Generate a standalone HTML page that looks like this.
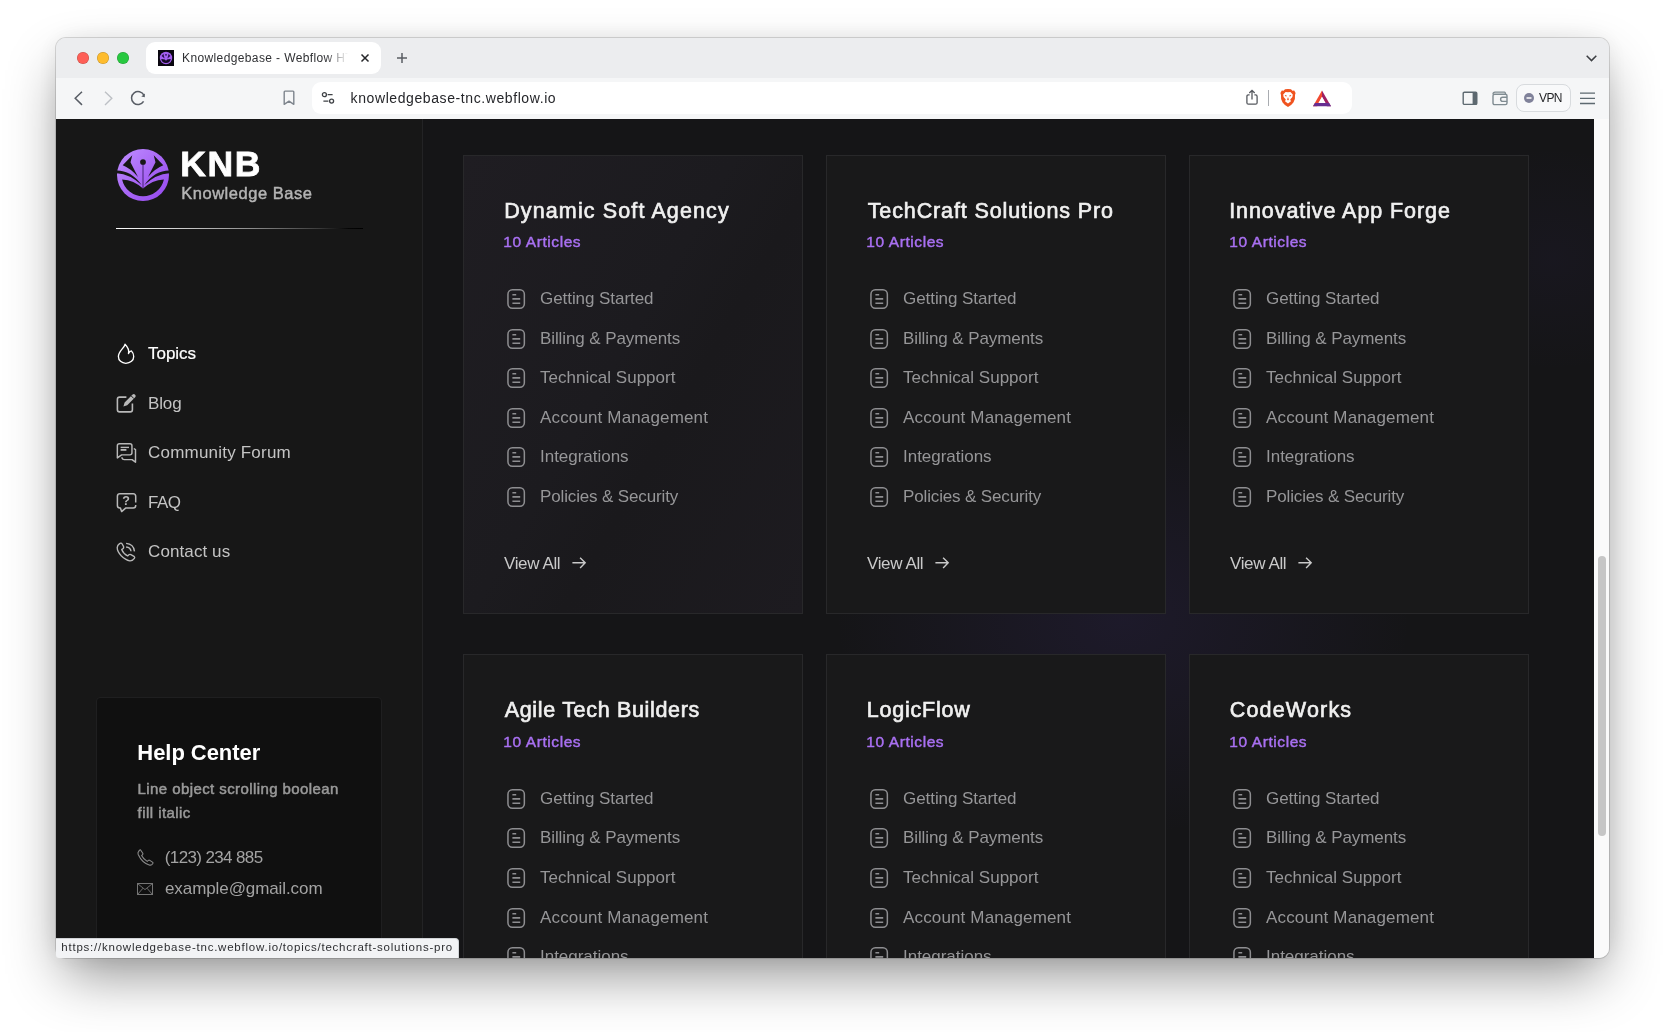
<!DOCTYPE html>
<html lang="en">
<head>
<meta charset="utf-8">
<title>Knowledgebase - Webflow HTML website template</title>
<style>
*{box-sizing:border-box;margin:0;padding:0}
html,body{width:1665px;height:1032px;overflow:hidden;background:#fff}
body{font-family:"Liberation Sans",sans-serif;position:relative}
#win{will-change:transform;position:absolute;left:56px;top:38px;width:1553px;height:920px;border-radius:10px;background:#f5f6f7;
  box-shadow:0 0 0 1px rgba(0,0,0,.14),0 24px 56px -8px rgba(0,0,0,.44),0 0 26px rgba(0,0,0,.07)}
#clip{position:absolute;left:0;top:0;width:1553px;height:920px;border-radius:10px;overflow:hidden}
#tabbar{position:absolute;left:0;top:0;width:1553px;height:40px;background:#ecedef}
#toolbar{position:absolute;left:0;top:40px;width:1553px;height:41px;background:#f5f6f7}
.light{position:absolute;top:14px;width:12px;height:12px;border-radius:50%;box-shadow:inset 0 0 0 .5px rgba(0,0,0,.24)}
#tab{position:absolute;left:90px;top:4px;width:235px;height:32px;border-radius:9px;background:#fff}
#url{position:absolute;left:256px;top:44px;width:1040px;height:32px;border-radius:9px;background:#fff}
#vpn{position:absolute;left:1460px;top:46px;width:55px;height:28px;border-radius:8px;border:1px solid #d8dbde;background:#f8f9fa}
#page{position:absolute;left:0;top:81px;width:1538px;height:839px;background:#151517;overflow:hidden}
#sbar{position:absolute;left:1538px;top:81px;width:15px;height:839px;background:#fafafa}
#thumb{position:absolute;left:4px;top:437px;width:8px;height:280px;border-radius:4px;background:#c6c6c6}
#side{position:absolute;left:0;top:0;width:367px;height:839px;background:#171717;border-right:1px solid #232325}
#main{position:absolute;left:367px;top:0;width:1171px;height:839px;overflow:hidden;background:radial-gradient(ellipse 400px 300px at 700px 500px,rgba(80,55,160,.14),transparent 72%),radial-gradient(ellipse 200px 160px at 1130px 140px,rgba(80,55,160,.06),transparent 70%)}
.t{position:absolute;white-space:nowrap;line-height:1}
svg{position:absolute;overflow:visible}
.card{position:absolute;width:340px;height:459px;border:1px solid #28282a;background:#19191a}
.c1{background:linear-gradient(120deg,#1f1d22 0%,#1c1b1f 45%,#1a191c 60%,#1d1b20 100%)}
#help{position:absolute;left:40px;top:578px;width:286px;height:300px;border:1px solid #1f1f20;border-radius:4px;background:#101010}
#status{position:absolute;left:0;top:900px;height:20px;width:403px;background:#f2f3f5;border-top:1px solid #d0d3d6;border-right:1px solid #d0d3d6;border-top-right-radius:4px;border-bottom-left-radius:3px}

</style>
</head>
<body>
<div id="win">
<div id="clip">
<div id="tabbar"></div><div id="toolbar"></div>
<div class="light" style="left:21px;background:#fe5f57"></div>
<div class="light" style="left:41px;background:#febc2e"></div>
<div class="light" style="left:61px;background:#28c840"></div>
<div id="tab"></div>
<svg style="left:102px;top:12px" width="16" height="16" viewBox="0 0 16 16">
<rect width="16" height="16" fill="#0a0710"/>
<circle cx="8" cy="8" r="6.2" fill="#a45ff0"/>
<path d="M3.2 9 Q8 9 8 11.4 Q8 9 12.8 9 A4.9 4.9 0 0 1 3.2 9Z" fill="#160a26"/>
<path d="M5.4 3.8 L3.6 6 L6.6 8.6 Z M10.6 3.8 L12.4 6 L9.4 8.6 Z" fill="#2a1050"/>
<circle cx="8" cy="4.8" r=".9" fill="#2a1050"/>
</svg>
<div class="t" style="left:126.00px;top:13.54px;font-size:12px;color:#2f3033;letter-spacing:0.38px;width:170px;height:18px;overflow:hidden;-webkit-mask-image:linear-gradient(90deg,#000 0,#000 143px,transparent 166px);mask-image:linear-gradient(90deg,#000 0,#000 143px,transparent 166px);">Knowledgebase - Webflow HTML website template</div>
<svg style="left:305px;top:16px" width="8" height="8" viewBox="0 0 8 8"><path d="M.5 .5 L7.5 7.5 M7.5 .5 L.5 7.5" stroke="#26272a" stroke-width="1.5" fill="none"/></svg>
<svg style="left:341px;top:15px" width="10" height="10" viewBox="0 0 10 10"><path d="M5 0 V10 M0 5 H10" stroke="#5a5d63" stroke-width="1.5" fill="none"/></svg>
<svg style="left:1529.5px;top:17px" width="11" height="7" viewBox="0 0 11 7"><path d="M.7 .8 L5.5 5.6 L10.3 .8" stroke="#3c3e42" stroke-width="1.5" fill="none"/></svg>
<svg style="left:17.5px;top:52.5px" width="9" height="15" viewBox="0 0 9 15"><path d="M8 .8 L1.2 7.3 L8 13.9" stroke="#585d65" stroke-width="1.5" fill="none"/></svg>
<svg style="left:47.599999999999994px;top:52.5px" width="9" height="15" viewBox="0 0 9 15"><path d="M1 .8 L7.8 7.3 L1 13.9" stroke="#bdc0c5" stroke-width="1.4" fill="none"/></svg>
<svg style="left:73.5px;top:51.7px" width="16" height="16" viewBox="0 0 16 16">
<path d="M13.9 5.2 A6.5 6.5 0 1 0 13.6 11.4" stroke="#585d65" stroke-width="1.5" fill="none"/>
<path d="M14.9 3.4 L14.8 7.3 L11.3 6.4 Z" fill="#585d65"/></svg>
<svg style="left:227px;top:52px" width="12" height="16" viewBox="0 0 12 16"><path d="M1.2 1.9 Q1.2 1.1 2 1.1 H10 Q10.8 1.1 10.8 1.9 V14.3 L6 11.2 L1.2 14.3 Z" stroke="#7d848c" stroke-width="1.4" fill="none" stroke-linejoin="round"/></svg>
<div id="url"></div>
<svg style="left:265px;top:53px" width="14" height="14" viewBox="0 0 14 14">
<circle cx="3.4" cy="3.7" r="2" stroke="#3f4246" stroke-width="1.3" fill="none"/><path d="M6.6 3.7 H11.6" stroke="#3f4246" stroke-width="1.3"/>
<circle cx="10.6" cy="10.1" r="2" stroke="#3f4246" stroke-width="1.3" fill="none"/><path d="M2.4 10.1 H7.4" stroke="#3f4246" stroke-width="1.3"/></svg>
<div class="t" style="left:294.60px;top:52.95px;font-size:14px;color:#25262a;letter-spacing:0.59px;">knowledgebase-tnc.webflow.io</div>
<svg style="left:1189px;top:51px" width="14" height="17" viewBox="0 0 14 17">
<path d="M4.6 5.9 H3.4 Q1.9 5.9 1.9 7.4 V13.7 Q1.9 15.2 3.4 15.2 H10.6 Q12.1 15.2 12.1 13.7 V7.4 Q12.1 5.9 10.6 5.9 H9.4" stroke="#55585e" stroke-width="1.3" fill="none"/>
<path d="M7 10.6 V1.6 M4.3 4 L7 1.3 L9.7 4" stroke="#55585e" stroke-width="1.3" fill="none"/></svg>
<div style="position:absolute;left:1212px;top:52px;width:1px;height:16px;background:#a9acb1"></div>
<svg style="left:1224px;top:51px" width="16" height="18" viewBox="0 0 16 18">
<path d="M8 0 L11 .3 L12.4 1.8 L14.2 1.5 L15.6 4 L15 6 Q15.6 9.6 13.4 13.4 Q11 16.6 8 18 Q5 16.6 2.6 13.4 Q.4 9.6 1 6 L.4 4 L1.8 1.5 L3.6 1.8 L5 .3 Z" fill="#f0531f"/>
<path d="M8 3.2 L10.4 3 L12.8 5.4 L12.4 8 L10.2 10.6 L11 12.2 L8 14.4 L5 12.2 L5.8 10.6 L3.6 8 L3.2 5.4 L5.6 3 Z" fill="#fff"/>
<path d="M5 6 L7 6.8 L6.4 7.6 L4.8 7 Z M11 6 L9 6.8 L9.6 7.6 L11.2 7 Z M8 8 L8.9 10.4 L8 11.6 L7.1 10.4 Z" fill="#f0531f"/>
</svg>
<svg style="left:1257px;top:51.599999999999994px" width="18" height="17" viewBox="0 0 18 17">
<path d="M9 .4 L0 16.2 H4.2 L9 7 Z" fill="#f1492f"/>
<path d="M9 .4 L18 16.2 H13.8 L9 7 Z" fill="#9e1f63"/>
<path d="M0 16.2 H18 L16.1 12.9 H1.9 Z" fill="#662d91"/>
<path d="M9 6.8 L12.6 13 H5.4 Z" fill="#fff"/>
</svg>
<svg style="left:1406px;top:53px" width="16" height="15" viewBox="0 0 16 15">
<rect x="1.2" y="1.2" width="13.6" height="12.2" rx="1.2" stroke="#5d6970" stroke-width="1.4" fill="none"/>
<rect x="10.6" y="1.2" width="4.4" height="12.2" fill="#5d6970"/></svg>
<svg style="left:1436px;top:52.599999999999994px" width="16" height="15" viewBox="0 0 16 15">
<path d="M1 3.2 Q1 1.2 3 1.2 H12.4 Q13.4 1.2 13.4 2.6 V3.2" stroke="#7f8b91" stroke-width="1.3" fill="none"/>
<rect x="1" y="3.2" width="14" height="10.4" rx="1.6" stroke="#7f8b91" stroke-width="1.4" fill="none"/>
<path d="M15 6.2 H10.6 Q8.6 6.2 8.6 8.3 Q8.6 10.4 10.6 10.4 H15" stroke="#7f8b91" stroke-width="1.4" fill="none"/></svg>
<div id="vpn"></div>
<svg style="left:1468px;top:55px" width="10" height="10" viewBox="0 0 10 10"><circle cx="5" cy="5" r="5" fill="#80829a"/><rect x="2.3" y="4.3" width="5.4" height="1.5" rx=".7" fill="#fff"/></svg>
<div class="t" style="left:1483.00px;top:54.04px;font-size:12px;color:#1f2023;letter-spacing:-0.6px;">VPN</div>
<svg style="left:1523.5px;top:54px" width="15" height="13" viewBox="0 0 15 13"><path d="M0 1.2 H15 M0 6.3 H15 M0 11.5 H15" stroke="#5d6970" stroke-width="1.3"/></svg>
<div id="page">
<div id="main">
<div class="card c1" style="left:40px;top:36px">
<div class="t" style="left:40.20px;top:44.90px;font-size:21.5px;color:#f0f0f0;letter-spacing:1.122px;-webkit-text-stroke:0.65px #f0f0f0;">Dynamic Soft Agency</div>
<div class="t" style="left:39.30px;top:78.38px;font-size:15.5px;color:#a970f2;letter-spacing:0.58px;-webkit-text-stroke:.45px #a970f2;">10 Articles</div>
<svg style="left:42.7px;top:132.6px" width="19" height="20" viewBox="0 0 19 20"><rect x=".95" y=".75" width="16.4" height="18.5" rx="4.4" stroke="#8e8e91" stroke-width="1.5" fill="none"/><path d="M5.4 5.8 H9.2 M5.4 9.9 H13.2 M5.4 14.2 H13.2" stroke="#8e8e91" stroke-width="1.6"/></svg>
<div class="t" style="left:76.00px;top:133.61px;font-size:17px;color:#969698;letter-spacing:-0.06px;">Getting Started</div>
<svg style="left:42.7px;top:172.6px" width="19" height="20" viewBox="0 0 19 20"><rect x=".95" y=".75" width="16.4" height="18.5" rx="4.4" stroke="#8e8e91" stroke-width="1.5" fill="none"/><path d="M5.4 5.8 H9.2 M5.4 9.9 H13.2 M5.4 14.2 H13.2" stroke="#8e8e91" stroke-width="1.6"/></svg>
<div class="t" style="left:76.00px;top:173.61px;font-size:17px;color:#969698;letter-spacing:-0.09px;">Billing &amp; Payments</div>
<svg style="left:42.7px;top:211.6px" width="19" height="20" viewBox="0 0 19 20"><rect x=".95" y=".75" width="16.4" height="18.5" rx="4.4" stroke="#8e8e91" stroke-width="1.5" fill="none"/><path d="M5.4 5.8 H9.2 M5.4 9.9 H13.2 M5.4 14.2 H13.2" stroke="#8e8e91" stroke-width="1.6"/></svg>
<div class="t" style="left:76.00px;top:212.61px;font-size:17px;color:#969698;letter-spacing:0.02px;">Technical Support</div>
<svg style="left:42.7px;top:251.6px" width="19" height="20" viewBox="0 0 19 20"><rect x=".95" y=".75" width="16.4" height="18.5" rx="4.4" stroke="#8e8e91" stroke-width="1.5" fill="none"/><path d="M5.4 5.8 H9.2 M5.4 9.9 H13.2 M5.4 14.2 H13.2" stroke="#8e8e91" stroke-width="1.6"/></svg>
<div class="t" style="left:76.00px;top:252.61px;font-size:17px;color:#969698;letter-spacing:0.15px;">Account Management</div>
<svg style="left:42.7px;top:291.0px" width="19" height="20" viewBox="0 0 19 20"><rect x=".95" y=".75" width="16.4" height="18.5" rx="4.4" stroke="#8e8e91" stroke-width="1.5" fill="none"/><path d="M5.4 5.8 H9.2 M5.4 9.9 H13.2 M5.4 14.2 H13.2" stroke="#8e8e91" stroke-width="1.6"/></svg>
<div class="t" style="left:76.00px;top:292.01px;font-size:17px;color:#969698;letter-spacing:-0.02px;">Integrations</div>
<svg style="left:42.7px;top:330.6px" width="19" height="20" viewBox="0 0 19 20"><rect x=".95" y=".75" width="16.4" height="18.5" rx="4.4" stroke="#8e8e91" stroke-width="1.5" fill="none"/><path d="M5.4 5.8 H9.2 M5.4 9.9 H13.2 M5.4 14.2 H13.2" stroke="#8e8e91" stroke-width="1.6"/></svg>
<div class="t" style="left:76.00px;top:331.61px;font-size:17px;color:#969698;letter-spacing:-0.14px;">Policies &amp; Security</div>
<div class="t" style="left:40.10px;top:398.61px;font-size:17px;color:#c9c9c9;letter-spacing:-0.39px;">View All</div>
<svg style="left:108.2px;top:401.1px" width="14" height="12" viewBox="0 0 14 12"><path d="M.4 5.8 H13.2 M8.1 .7 L13.2 5.8 L8.1 10.9" stroke="#c9c9c9" stroke-width="1.4" fill="none"/></svg>
</div>
<div class="card" style="left:403px;top:36px">
<div class="t" style="left:40.70px;top:44.90px;font-size:21.5px;color:#f0f0f0;letter-spacing:0.886px;-webkit-text-stroke:0.65px #f0f0f0;">TechCraft Solutions Pro</div>
<div class="t" style="left:39.30px;top:78.38px;font-size:15.5px;color:#a970f2;letter-spacing:0.58px;-webkit-text-stroke:.45px #a970f2;">10 Articles</div>
<svg style="left:42.7px;top:132.6px" width="19" height="20" viewBox="0 0 19 20"><rect x=".95" y=".75" width="16.4" height="18.5" rx="4.4" stroke="#8e8e91" stroke-width="1.5" fill="none"/><path d="M5.4 5.8 H9.2 M5.4 9.9 H13.2 M5.4 14.2 H13.2" stroke="#8e8e91" stroke-width="1.6"/></svg>
<div class="t" style="left:76.00px;top:133.61px;font-size:17px;color:#969698;letter-spacing:-0.06px;">Getting Started</div>
<svg style="left:42.7px;top:172.6px" width="19" height="20" viewBox="0 0 19 20"><rect x=".95" y=".75" width="16.4" height="18.5" rx="4.4" stroke="#8e8e91" stroke-width="1.5" fill="none"/><path d="M5.4 5.8 H9.2 M5.4 9.9 H13.2 M5.4 14.2 H13.2" stroke="#8e8e91" stroke-width="1.6"/></svg>
<div class="t" style="left:76.00px;top:173.61px;font-size:17px;color:#969698;letter-spacing:-0.09px;">Billing &amp; Payments</div>
<svg style="left:42.7px;top:211.6px" width="19" height="20" viewBox="0 0 19 20"><rect x=".95" y=".75" width="16.4" height="18.5" rx="4.4" stroke="#8e8e91" stroke-width="1.5" fill="none"/><path d="M5.4 5.8 H9.2 M5.4 9.9 H13.2 M5.4 14.2 H13.2" stroke="#8e8e91" stroke-width="1.6"/></svg>
<div class="t" style="left:76.00px;top:212.61px;font-size:17px;color:#969698;letter-spacing:0.02px;">Technical Support</div>
<svg style="left:42.7px;top:251.6px" width="19" height="20" viewBox="0 0 19 20"><rect x=".95" y=".75" width="16.4" height="18.5" rx="4.4" stroke="#8e8e91" stroke-width="1.5" fill="none"/><path d="M5.4 5.8 H9.2 M5.4 9.9 H13.2 M5.4 14.2 H13.2" stroke="#8e8e91" stroke-width="1.6"/></svg>
<div class="t" style="left:76.00px;top:252.61px;font-size:17px;color:#969698;letter-spacing:0.15px;">Account Management</div>
<svg style="left:42.7px;top:291.0px" width="19" height="20" viewBox="0 0 19 20"><rect x=".95" y=".75" width="16.4" height="18.5" rx="4.4" stroke="#8e8e91" stroke-width="1.5" fill="none"/><path d="M5.4 5.8 H9.2 M5.4 9.9 H13.2 M5.4 14.2 H13.2" stroke="#8e8e91" stroke-width="1.6"/></svg>
<div class="t" style="left:76.00px;top:292.01px;font-size:17px;color:#969698;letter-spacing:-0.02px;">Integrations</div>
<svg style="left:42.7px;top:330.6px" width="19" height="20" viewBox="0 0 19 20"><rect x=".95" y=".75" width="16.4" height="18.5" rx="4.4" stroke="#8e8e91" stroke-width="1.5" fill="none"/><path d="M5.4 5.8 H9.2 M5.4 9.9 H13.2 M5.4 14.2 H13.2" stroke="#8e8e91" stroke-width="1.6"/></svg>
<div class="t" style="left:76.00px;top:331.61px;font-size:17px;color:#969698;letter-spacing:-0.14px;">Policies &amp; Security</div>
<div class="t" style="left:40.10px;top:398.61px;font-size:17px;color:#c9c9c9;letter-spacing:-0.39px;">View All</div>
<svg style="left:108.2px;top:401.1px" width="14" height="12" viewBox="0 0 14 12"><path d="M.4 5.8 H13.2 M8.1 .7 L13.2 5.8 L8.1 10.9" stroke="#c9c9c9" stroke-width="1.4" fill="none"/></svg>
</div>
<div class="card" style="left:766px;top:36px">
<div class="t" style="left:39.20px;top:44.90px;font-size:21.5px;color:#f0f0f0;letter-spacing:0.921px;-webkit-text-stroke:0.65px #f0f0f0;">Innovative App Forge</div>
<div class="t" style="left:39.30px;top:78.38px;font-size:15.5px;color:#a970f2;letter-spacing:0.58px;-webkit-text-stroke:.45px #a970f2;">10 Articles</div>
<svg style="left:42.7px;top:132.6px" width="19" height="20" viewBox="0 0 19 20"><rect x=".95" y=".75" width="16.4" height="18.5" rx="4.4" stroke="#8e8e91" stroke-width="1.5" fill="none"/><path d="M5.4 5.8 H9.2 M5.4 9.9 H13.2 M5.4 14.2 H13.2" stroke="#8e8e91" stroke-width="1.6"/></svg>
<div class="t" style="left:76.00px;top:133.61px;font-size:17px;color:#969698;letter-spacing:-0.06px;">Getting Started</div>
<svg style="left:42.7px;top:172.6px" width="19" height="20" viewBox="0 0 19 20"><rect x=".95" y=".75" width="16.4" height="18.5" rx="4.4" stroke="#8e8e91" stroke-width="1.5" fill="none"/><path d="M5.4 5.8 H9.2 M5.4 9.9 H13.2 M5.4 14.2 H13.2" stroke="#8e8e91" stroke-width="1.6"/></svg>
<div class="t" style="left:76.00px;top:173.61px;font-size:17px;color:#969698;letter-spacing:-0.09px;">Billing &amp; Payments</div>
<svg style="left:42.7px;top:211.6px" width="19" height="20" viewBox="0 0 19 20"><rect x=".95" y=".75" width="16.4" height="18.5" rx="4.4" stroke="#8e8e91" stroke-width="1.5" fill="none"/><path d="M5.4 5.8 H9.2 M5.4 9.9 H13.2 M5.4 14.2 H13.2" stroke="#8e8e91" stroke-width="1.6"/></svg>
<div class="t" style="left:76.00px;top:212.61px;font-size:17px;color:#969698;letter-spacing:0.02px;">Technical Support</div>
<svg style="left:42.7px;top:251.6px" width="19" height="20" viewBox="0 0 19 20"><rect x=".95" y=".75" width="16.4" height="18.5" rx="4.4" stroke="#8e8e91" stroke-width="1.5" fill="none"/><path d="M5.4 5.8 H9.2 M5.4 9.9 H13.2 M5.4 14.2 H13.2" stroke="#8e8e91" stroke-width="1.6"/></svg>
<div class="t" style="left:76.00px;top:252.61px;font-size:17px;color:#969698;letter-spacing:0.15px;">Account Management</div>
<svg style="left:42.7px;top:291.0px" width="19" height="20" viewBox="0 0 19 20"><rect x=".95" y=".75" width="16.4" height="18.5" rx="4.4" stroke="#8e8e91" stroke-width="1.5" fill="none"/><path d="M5.4 5.8 H9.2 M5.4 9.9 H13.2 M5.4 14.2 H13.2" stroke="#8e8e91" stroke-width="1.6"/></svg>
<div class="t" style="left:76.00px;top:292.01px;font-size:17px;color:#969698;letter-spacing:-0.02px;">Integrations</div>
<svg style="left:42.7px;top:330.6px" width="19" height="20" viewBox="0 0 19 20"><rect x=".95" y=".75" width="16.4" height="18.5" rx="4.4" stroke="#8e8e91" stroke-width="1.5" fill="none"/><path d="M5.4 5.8 H9.2 M5.4 9.9 H13.2 M5.4 14.2 H13.2" stroke="#8e8e91" stroke-width="1.6"/></svg>
<div class="t" style="left:76.00px;top:331.61px;font-size:17px;color:#969698;letter-spacing:-0.14px;">Policies &amp; Security</div>
<div class="t" style="left:40.10px;top:398.61px;font-size:17px;color:#c9c9c9;letter-spacing:-0.39px;">View All</div>
<svg style="left:108.2px;top:401.1px" width="14" height="12" viewBox="0 0 14 12"><path d="M.4 5.8 H13.2 M8.1 .7 L13.2 5.8 L8.1 10.9" stroke="#c9c9c9" stroke-width="1.4" fill="none"/></svg>
</div>
<div class="card" style="left:40px;top:535px">
<div class="t" style="left:40.70px;top:45.10px;font-size:21.5px;color:#f0f0f0;letter-spacing:0.677px;-webkit-text-stroke:0.65px #f0f0f0;">Agile Tech Builders</div>
<div class="t" style="left:39.30px;top:79.38px;font-size:15.5px;color:#a970f2;letter-spacing:0.58px;-webkit-text-stroke:.45px #a970f2;">10 Articles</div>
<svg style="left:42.7px;top:133.6px" width="19" height="20" viewBox="0 0 19 20"><rect x=".95" y=".75" width="16.4" height="18.5" rx="4.4" stroke="#8e8e91" stroke-width="1.5" fill="none"/><path d="M5.4 5.8 H9.2 M5.4 9.9 H13.2 M5.4 14.2 H13.2" stroke="#8e8e91" stroke-width="1.6"/></svg>
<div class="t" style="left:76.00px;top:134.61px;font-size:17px;color:#969698;letter-spacing:-0.06px;">Getting Started</div>
<svg style="left:42.7px;top:172.6px" width="19" height="20" viewBox="0 0 19 20"><rect x=".95" y=".75" width="16.4" height="18.5" rx="4.4" stroke="#8e8e91" stroke-width="1.5" fill="none"/><path d="M5.4 5.8 H9.2 M5.4 9.9 H13.2 M5.4 14.2 H13.2" stroke="#8e8e91" stroke-width="1.6"/></svg>
<div class="t" style="left:76.00px;top:173.61px;font-size:17px;color:#969698;letter-spacing:-0.09px;">Billing &amp; Payments</div>
<svg style="left:42.7px;top:212.6px" width="19" height="20" viewBox="0 0 19 20"><rect x=".95" y=".75" width="16.4" height="18.5" rx="4.4" stroke="#8e8e91" stroke-width="1.5" fill="none"/><path d="M5.4 5.8 H9.2 M5.4 9.9 H13.2 M5.4 14.2 H13.2" stroke="#8e8e91" stroke-width="1.6"/></svg>
<div class="t" style="left:76.00px;top:213.61px;font-size:17px;color:#969698;letter-spacing:0.02px;">Technical Support</div>
<svg style="left:42.7px;top:252.6px" width="19" height="20" viewBox="0 0 19 20"><rect x=".95" y=".75" width="16.4" height="18.5" rx="4.4" stroke="#8e8e91" stroke-width="1.5" fill="none"/><path d="M5.4 5.8 H9.2 M5.4 9.9 H13.2 M5.4 14.2 H13.2" stroke="#8e8e91" stroke-width="1.6"/></svg>
<div class="t" style="left:76.00px;top:253.61px;font-size:17px;color:#969698;letter-spacing:0.15px;">Account Management</div>
<svg style="left:42.7px;top:292.0px" width="19" height="20" viewBox="0 0 19 20"><rect x=".95" y=".75" width="16.4" height="18.5" rx="4.4" stroke="#8e8e91" stroke-width="1.5" fill="none"/><path d="M5.4 5.8 H9.2 M5.4 9.9 H13.2 M5.4 14.2 H13.2" stroke="#8e8e91" stroke-width="1.6"/></svg>
<div class="t" style="left:76.00px;top:293.01px;font-size:17px;color:#969698;letter-spacing:-0.02px;">Integrations</div>
<svg style="left:42.7px;top:331.6px" width="19" height="20" viewBox="0 0 19 20"><rect x=".95" y=".75" width="16.4" height="18.5" rx="4.4" stroke="#8e8e91" stroke-width="1.5" fill="none"/><path d="M5.4 5.8 H9.2 M5.4 9.9 H13.2 M5.4 14.2 H13.2" stroke="#8e8e91" stroke-width="1.6"/></svg>
<div class="t" style="left:76.00px;top:332.61px;font-size:17px;color:#969698;letter-spacing:-0.14px;">Policies &amp; Security</div>
<div class="t" style="left:40.10px;top:399.61px;font-size:17px;color:#c9c9c9;letter-spacing:-0.39px;">View All</div>
<svg style="left:108.2px;top:402.1px" width="14" height="12" viewBox="0 0 14 12"><path d="M.4 5.8 H13.2 M8.1 .7 L13.2 5.8 L8.1 10.9" stroke="#c9c9c9" stroke-width="1.4" fill="none"/></svg>
</div>
<div class="card" style="left:403px;top:535px">
<div class="t" style="left:39.70px;top:45.10px;font-size:21.5px;color:#f0f0f0;letter-spacing:0.8px;-webkit-text-stroke:0.65px #f0f0f0;">LogicFlow</div>
<div class="t" style="left:39.30px;top:79.38px;font-size:15.5px;color:#a970f2;letter-spacing:0.58px;-webkit-text-stroke:.45px #a970f2;">10 Articles</div>
<svg style="left:42.7px;top:133.6px" width="19" height="20" viewBox="0 0 19 20"><rect x=".95" y=".75" width="16.4" height="18.5" rx="4.4" stroke="#8e8e91" stroke-width="1.5" fill="none"/><path d="M5.4 5.8 H9.2 M5.4 9.9 H13.2 M5.4 14.2 H13.2" stroke="#8e8e91" stroke-width="1.6"/></svg>
<div class="t" style="left:76.00px;top:134.61px;font-size:17px;color:#969698;letter-spacing:-0.06px;">Getting Started</div>
<svg style="left:42.7px;top:172.6px" width="19" height="20" viewBox="0 0 19 20"><rect x=".95" y=".75" width="16.4" height="18.5" rx="4.4" stroke="#8e8e91" stroke-width="1.5" fill="none"/><path d="M5.4 5.8 H9.2 M5.4 9.9 H13.2 M5.4 14.2 H13.2" stroke="#8e8e91" stroke-width="1.6"/></svg>
<div class="t" style="left:76.00px;top:173.61px;font-size:17px;color:#969698;letter-spacing:-0.09px;">Billing &amp; Payments</div>
<svg style="left:42.7px;top:212.6px" width="19" height="20" viewBox="0 0 19 20"><rect x=".95" y=".75" width="16.4" height="18.5" rx="4.4" stroke="#8e8e91" stroke-width="1.5" fill="none"/><path d="M5.4 5.8 H9.2 M5.4 9.9 H13.2 M5.4 14.2 H13.2" stroke="#8e8e91" stroke-width="1.6"/></svg>
<div class="t" style="left:76.00px;top:213.61px;font-size:17px;color:#969698;letter-spacing:0.02px;">Technical Support</div>
<svg style="left:42.7px;top:252.6px" width="19" height="20" viewBox="0 0 19 20"><rect x=".95" y=".75" width="16.4" height="18.5" rx="4.4" stroke="#8e8e91" stroke-width="1.5" fill="none"/><path d="M5.4 5.8 H9.2 M5.4 9.9 H13.2 M5.4 14.2 H13.2" stroke="#8e8e91" stroke-width="1.6"/></svg>
<div class="t" style="left:76.00px;top:253.61px;font-size:17px;color:#969698;letter-spacing:0.15px;">Account Management</div>
<svg style="left:42.7px;top:292.0px" width="19" height="20" viewBox="0 0 19 20"><rect x=".95" y=".75" width="16.4" height="18.5" rx="4.4" stroke="#8e8e91" stroke-width="1.5" fill="none"/><path d="M5.4 5.8 H9.2 M5.4 9.9 H13.2 M5.4 14.2 H13.2" stroke="#8e8e91" stroke-width="1.6"/></svg>
<div class="t" style="left:76.00px;top:293.01px;font-size:17px;color:#969698;letter-spacing:-0.02px;">Integrations</div>
<svg style="left:42.7px;top:331.6px" width="19" height="20" viewBox="0 0 19 20"><rect x=".95" y=".75" width="16.4" height="18.5" rx="4.4" stroke="#8e8e91" stroke-width="1.5" fill="none"/><path d="M5.4 5.8 H9.2 M5.4 9.9 H13.2 M5.4 14.2 H13.2" stroke="#8e8e91" stroke-width="1.6"/></svg>
<div class="t" style="left:76.00px;top:332.61px;font-size:17px;color:#969698;letter-spacing:-0.14px;">Policies &amp; Security</div>
<div class="t" style="left:40.10px;top:399.61px;font-size:17px;color:#c9c9c9;letter-spacing:-0.39px;">View All</div>
<svg style="left:108.2px;top:402.1px" width="14" height="12" viewBox="0 0 14 12"><path d="M.4 5.8 H13.2 M8.1 .7 L13.2 5.8 L8.1 10.9" stroke="#c9c9c9" stroke-width="1.4" fill="none"/></svg>
</div>
<div class="card" style="left:766px;top:535px">
<div class="t" style="left:39.70px;top:45.10px;font-size:21.5px;color:#f0f0f0;letter-spacing:1.182px;-webkit-text-stroke:0.65px #f0f0f0;">CodeWorks</div>
<div class="t" style="left:39.30px;top:79.38px;font-size:15.5px;color:#a970f2;letter-spacing:0.58px;-webkit-text-stroke:.45px #a970f2;">10 Articles</div>
<svg style="left:42.7px;top:133.6px" width="19" height="20" viewBox="0 0 19 20"><rect x=".95" y=".75" width="16.4" height="18.5" rx="4.4" stroke="#8e8e91" stroke-width="1.5" fill="none"/><path d="M5.4 5.8 H9.2 M5.4 9.9 H13.2 M5.4 14.2 H13.2" stroke="#8e8e91" stroke-width="1.6"/></svg>
<div class="t" style="left:76.00px;top:134.61px;font-size:17px;color:#969698;letter-spacing:-0.06px;">Getting Started</div>
<svg style="left:42.7px;top:172.6px" width="19" height="20" viewBox="0 0 19 20"><rect x=".95" y=".75" width="16.4" height="18.5" rx="4.4" stroke="#8e8e91" stroke-width="1.5" fill="none"/><path d="M5.4 5.8 H9.2 M5.4 9.9 H13.2 M5.4 14.2 H13.2" stroke="#8e8e91" stroke-width="1.6"/></svg>
<div class="t" style="left:76.00px;top:173.61px;font-size:17px;color:#969698;letter-spacing:-0.09px;">Billing &amp; Payments</div>
<svg style="left:42.7px;top:212.6px" width="19" height="20" viewBox="0 0 19 20"><rect x=".95" y=".75" width="16.4" height="18.5" rx="4.4" stroke="#8e8e91" stroke-width="1.5" fill="none"/><path d="M5.4 5.8 H9.2 M5.4 9.9 H13.2 M5.4 14.2 H13.2" stroke="#8e8e91" stroke-width="1.6"/></svg>
<div class="t" style="left:76.00px;top:213.61px;font-size:17px;color:#969698;letter-spacing:0.02px;">Technical Support</div>
<svg style="left:42.7px;top:252.6px" width="19" height="20" viewBox="0 0 19 20"><rect x=".95" y=".75" width="16.4" height="18.5" rx="4.4" stroke="#8e8e91" stroke-width="1.5" fill="none"/><path d="M5.4 5.8 H9.2 M5.4 9.9 H13.2 M5.4 14.2 H13.2" stroke="#8e8e91" stroke-width="1.6"/></svg>
<div class="t" style="left:76.00px;top:253.61px;font-size:17px;color:#969698;letter-spacing:0.15px;">Account Management</div>
<svg style="left:42.7px;top:292.0px" width="19" height="20" viewBox="0 0 19 20"><rect x=".95" y=".75" width="16.4" height="18.5" rx="4.4" stroke="#8e8e91" stroke-width="1.5" fill="none"/><path d="M5.4 5.8 H9.2 M5.4 9.9 H13.2 M5.4 14.2 H13.2" stroke="#8e8e91" stroke-width="1.6"/></svg>
<div class="t" style="left:76.00px;top:293.01px;font-size:17px;color:#969698;letter-spacing:-0.02px;">Integrations</div>
<svg style="left:42.7px;top:331.6px" width="19" height="20" viewBox="0 0 19 20"><rect x=".95" y=".75" width="16.4" height="18.5" rx="4.4" stroke="#8e8e91" stroke-width="1.5" fill="none"/><path d="M5.4 5.8 H9.2 M5.4 9.9 H13.2 M5.4 14.2 H13.2" stroke="#8e8e91" stroke-width="1.6"/></svg>
<div class="t" style="left:76.00px;top:332.61px;font-size:17px;color:#969698;letter-spacing:-0.14px;">Policies &amp; Security</div>
<div class="t" style="left:40.10px;top:399.61px;font-size:17px;color:#c9c9c9;letter-spacing:-0.39px;">View All</div>
<svg style="left:108.2px;top:402.1px" width="14" height="12" viewBox="0 0 14 12"><path d="M.4 5.8 H13.2 M8.1 .7 L13.2 5.8 L8.1 10.9" stroke="#c9c9c9" stroke-width="1.4" fill="none"/></svg>
</div>
</div>
<div id="side">
<svg style="left:60.6px;top:29.6px" width="52" height="52" viewBox="0 0 52 52">
<defs><linearGradient id="lg" x1="0" y1="0" x2="1" y2="1"><stop offset="0" stop-color="#c08fff"/><stop offset=".55" stop-color="#a764f5"/><stop offset="1" stop-color="#9448ee"/></linearGradient></defs>
<circle cx="26" cy="26" r="26" fill="url(#lg)"/>
<path d="M15.3 6.2 L5.7 16.2 Q14.5 19.8 21 28 L13.5 13.2 Z" fill="#171717"/>
<path d="M36.7 6.2 L46.3 16.2 Q37.5 19.8 31 28 L38.5 13.2 Z" fill="#171717"/>
<path d="M-.2 21.6 Q14 21.6 24.6 36 Q13 25 -.2 24.2 Z" fill="#171717"/>
<path d="M52.2 21.6 Q38 21.6 27.4 36 Q39 25 52.2 24.2 Z" fill="#171717"/>
<path d="M5.1 30.4 Q17 31 26 39.6 Q35 31 46.9 30.4 A21.4 21.4 0 0 1 5.1 30.4 Z" fill="#171717"/>
<circle cx="26" cy="13.1" r="2.9" fill="#171717"/>
<path d="M26 15 V39" stroke="#3a1c66" stroke-width=".9"/>
</svg>
<div class="t" style="left:124.20px;top:28.45px;font-size:35.5px;color:#ffffff;font-weight:bold;letter-spacing:1.7px;-webkit-text-stroke:.8px #fff;">KNB</div>
<div class="t" style="left:125.20px;top:65.73px;font-size:16.5px;color:#b4b4b4;letter-spacing:0.53px;-webkit-text-stroke:.45px #b4b4b4;">Knowledge Base</div>
<div style="position:absolute;left:60px;top:108.80000000000001px;width:247px;height:1.3px;background:linear-gradient(90deg,#fff 0,#d0d0d0 25%,#8c8c8c 55%,#3c3c3c 82%,#050505 94%,#000 100%)"></div>
<div class="t" style="left:92.10px;top:226.11px;font-size:17px;color:#ffffff;letter-spacing:-0.06px;-webkit-text-stroke:.2px #fff;">Topics</div>
<div class="t" style="left:92.10px;top:275.81px;font-size:17px;color:#c4c4c4;letter-spacing:-0.17px;">Blog</div>
<div class="t" style="left:92.10px;top:325.31px;font-size:17px;color:#c4c4c4;letter-spacing:0.2px;">Community Forum</div>
<div class="t" style="left:92.10px;top:374.81px;font-size:17px;color:#c4c4c4;letter-spacing:-0.6px;">FAQ</div>
<div class="t" style="left:92.10px;top:424.11px;font-size:17px;color:#c4c4c4;letter-spacing:0.09px;">Contact us</div>
<svg style="left:60px;top:224px" width="20" height="22" viewBox="0 0 20 22">
<path d="M9 1.3 C8.4 4.8 2.4 8.2 2.4 13.4 C2.4 17.4 5.6 20.3 9.8 20.3 C14.4 20.3 17.7 17.4 17.7 13.4 C17.7 11 16.6 9.2 15.4 7.9 C14 8.2 13 9.4 12.5 10.6 C13.4 7.6 11.6 4 9 1.3 Z" stroke="#fff" stroke-width="1.35" fill="none" stroke-linejoin="round"/></svg>
<svg style="left:59.5px;top:274px" width="21" height="21" viewBox="0 0 21 21">
<path d="M10.4 4.1 H3.6 Q1.4 4.1 1.4 6.3 V16.7 Q1.4 18.9 3.6 18.9 H14.2 Q16.4 18.9 16.4 16.7 V10.4" stroke="#b9b9b9" stroke-width="1.6" fill="none"/>
<path d="M16.6 1.6 Q17.8 .4 19.1 1.7 Q20.4 3 19.2 4.2 L11.2 12.2 L7.4 13.4 L8.6 9.6 Z" fill="#b9b9b9"/>
<path d="M15.2 2.9 L17.9 5.6" stroke="#171717" stroke-width="1"/></svg>
<svg style="left:59.5px;top:323px" width="21" height="22" viewBox="0 0 21 22">
<path d="M3.4 1.65 H13.9 Q15.95 1.65 15.95 3.7 V10.8 Q15.95 12.85 13.9 12.85 H5.6 L1.35 15.9 V3.7 Q1.35 1.65 3.4 1.65 Z" stroke="#b9b9b9" stroke-width="1.45" fill="none" stroke-linejoin="round"/>
<path d="M4.6 5.4 H13" stroke="#b9b9b9" stroke-width="1.4"/><path d="M4.6 7.9 H10.4" stroke="#b9b9b9" stroke-width="1.8"/>
<path d="M17.8 6.5 L19.5 7.6 V20.2 L16 17.6 H8.4 Q6 17.6 5.9 15.3" stroke="#b9b9b9" stroke-width="1.45" fill="none" stroke-linejoin="round"/></svg>
<svg style="left:59.5px;top:373px" width="21" height="21" viewBox="0 0 21 21">
<path d="M19.7 10.6 V4.3 Q19.7 1.8 17.2 1.8 H3.9 Q1.4 1.8 1.4 4.3 V13.6 Q1.4 16.1 3.9 16.1 H4.4 L5.6 19.6 L9.6 16.1 H17.2 Q19.7 16.1 19.7 13.6 V13.1" stroke="#b9b9b9" stroke-width="1.5" fill="none" stroke-linejoin="round"/></svg>
<div class="t" style="left:66.20px;top:376.32px;font-size:12.5px;color:#b9b9b9;font-weight:bold;">?</div>
<svg style="left:60px;top:423px" width="20" height="20" viewBox="0 0 20 20">
<path d="M4.7 1.1 Q5.6 .9 6.2 2 L7.6 4.6 Q8 5.8 7 6.6 L5.7 7.5 Q7.2 11.6 11.6 13.9 L12.9 12.7 Q13.8 12 14.9 12.6 L18 14.3 Q19.2 15.2 18.4 16.4 Q16.6 19 13.8 18.8 Q9.6 18.2 5.2 13.8 Q1.2 9.6 1.2 5.6 Q1.3 3.2 3.6 1.6 Q4.2 1.2 4.7 1.1 Z" stroke="#b9b9b9" stroke-width="1.35" fill="none" stroke-linejoin="round"/>
<path d="M10.1 1.4 Q17.6 2 18.5 9.3" stroke="#b9b9b9" stroke-width="1.4" fill="none"/>
<path d="M10.1 5 Q14.6 5.4 15 9.3" stroke="#b9b9b9" stroke-width="1.4" fill="none"/></svg>
<div id="help"></div>
<div class="t" style="left:81.30px;top:623.38px;font-size:22px;color:#ffffff;font-weight:bold;letter-spacing:-0.05px;">Help Center</div>
<div class="t" style="left:81.60px;top:661.60px;font-size:15px;color:#999999;letter-spacing:0.41px;-webkit-text-stroke:.5px #999999;">Line object scrolling boolean</div>
<div class="t" style="left:81.60px;top:685.80px;font-size:15px;color:#999999;letter-spacing:0.44px;-webkit-text-stroke:.5px #999999;">fill italic</div>
<svg style="left:81px;top:730px" width="17" height="17" viewBox="0 0 17 17">
<path d="M3.6 1 L5.8 4.2 Q6.2 5 5.6 5.6 L4.6 6.6 Q6.2 10 10.2 12.4 L11.4 11.4 Q12 10.9 12.8 11.4 L15.8 13.4 Q16.3 13.9 15.8 14.5 L14.8 15.6 Q13.8 16.4 12.2 15.9 Q5 13.6 1.2 5.4 Q.6 3.8 1.5 2.7 L2.6 1.2 Q3.1 .7 3.6 1 Z" stroke="#8a8a8a" stroke-width="1.1" fill="none" stroke-linejoin="round"/></svg>
<svg style="left:81px;top:764px" width="16" height="12" viewBox="0 0 16 12">
<rect x=".5" y=".5" width="15" height="11" stroke="#757575" stroke-width="1" fill="none"/>
<path d="M.8 .8 L8 6.6 L15.2 .8 M.8 11.2 L6 5.2 M15.2 11.2 L10 5.2" stroke="#757575" stroke-width=".9" fill="none"/></svg>
<div class="t" style="left:108.80px;top:729.91px;font-size:17px;color:#a3a3a3;letter-spacing:-0.63px;">(123) 234 885</div>
<div class="t" style="left:109.00px;top:761.01px;font-size:17px;color:#a3a3a3;letter-spacing:-0.09px;">example@gmail.com</div>
</div>
</div>
<div id="sbar"><div id="thumb"></div></div>
</div>
<div id="status"></div><div class="t" style="left:5.30px;top:903.87px;font-size:11.5px;color:#2c2d30;letter-spacing:0.77px;">https://knowledgebase-tnc.webflow.io/topics/techcraft-solutions-pro</div>
</div>
</body>
</html>
